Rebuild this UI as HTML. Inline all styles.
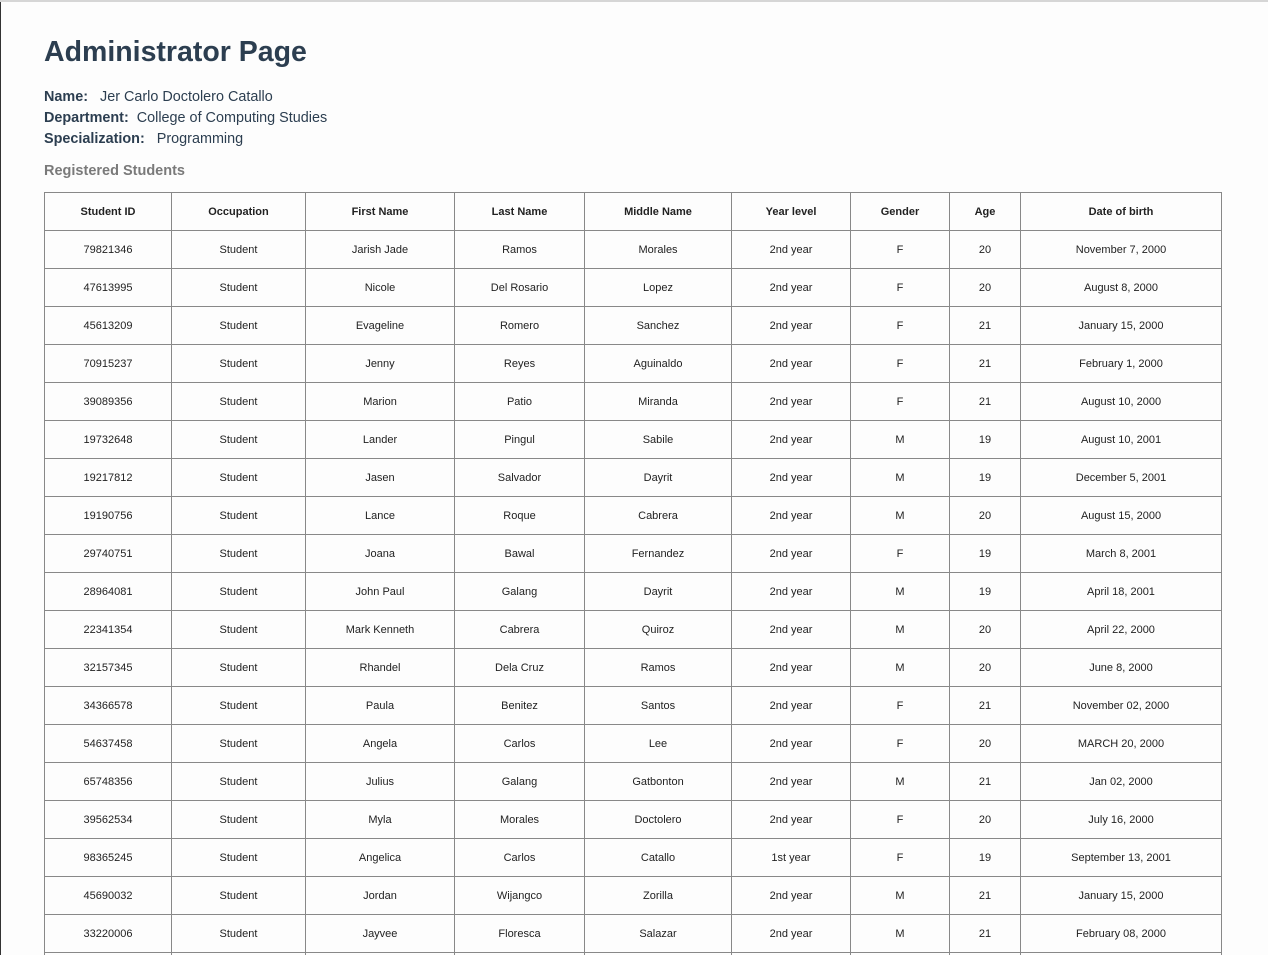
<!DOCTYPE html>
<html style="overflow:hidden;height:955px"><head><style>
html,body{margin:0;padding:0}
body{width:1268px;height:955px;overflow:hidden;background:#fdfdfd;font-family:"Liberation Sans",sans-serif;border-top:2px solid #d6d6d6;box-sizing:border-box;position:relative}
.lb{position:absolute;left:0;top:0;width:1px;height:955px;background:#333}
h1{position:absolute;left:44px;top:30px;margin:0;font-size:28.5px;color:#2c3e50;font-weight:bold;line-height:40px}
.info{position:absolute;left:44px;top:85px;font-size:14.4px;line-height:21px;color:#2c3e50}
.reg{position:absolute;left:44px;top:161px;font-size:14.5px;font-weight:bold;color:#7a7a7a}
table{position:absolute;left:44px;top:190px;border-collapse:collapse;font-size:11px;color:#222}
td,th{border:1px solid #888;height:37px;padding:0;text-align:center}
th{font-weight:bold}
</style></head><body>
<div class="lb"></div>
<h1>Administrator Page</h1>
<div class="info"><b>Name:</b>&nbsp;&nbsp; Jer Carlo Doctolero Catallo<br><b>Department:</b>&nbsp; College of Computing Studies<br><b>Specialization:</b>&nbsp;&nbsp; Programming</div>
<div class="reg">Registered Students</div>
<table>
<colgroup><col style="width:127px"><col style="width:134px"><col style="width:149px"><col style="width:130px"><col style="width:147px"><col style="width:119px"><col style="width:99px"><col style="width:71px"><col style="width:201px"></colgroup>
<tr><th>Student ID</th><th>Occupation</th><th>First Name</th><th>Last Name</th><th>Middle Name</th><th>Year level</th><th>Gender</th><th>Age</th><th>Date of birth</th></tr>
<tr><td>79821346</td><td>Student</td><td>Jarish Jade</td><td>Ramos</td><td>Morales</td><td>2nd year</td><td>F</td><td>20</td><td>November 7, 2000</td></tr>
<tr><td>47613995</td><td>Student</td><td>Nicole</td><td>Del Rosario</td><td>Lopez</td><td>2nd year</td><td>F</td><td>20</td><td>August 8, 2000</td></tr>
<tr><td>45613209</td><td>Student</td><td>Evageline</td><td>Romero</td><td>Sanchez</td><td>2nd year</td><td>F</td><td>21</td><td>January 15, 2000</td></tr>
<tr><td>70915237</td><td>Student</td><td>Jenny</td><td>Reyes</td><td>Aguinaldo</td><td>2nd year</td><td>F</td><td>21</td><td>February 1, 2000</td></tr>
<tr><td>39089356</td><td>Student</td><td>Marion</td><td>Patio</td><td>Miranda</td><td>2nd year</td><td>F</td><td>21</td><td>August 10, 2000</td></tr>
<tr><td>19732648</td><td>Student</td><td>Lander</td><td>Pingul</td><td>Sabile</td><td>2nd year</td><td>M</td><td>19</td><td>August 10, 2001</td></tr>
<tr><td>19217812</td><td>Student</td><td>Jasen</td><td>Salvador</td><td>Dayrit</td><td>2nd year</td><td>M</td><td>19</td><td>December 5, 2001</td></tr>
<tr><td>19190756</td><td>Student</td><td>Lance</td><td>Roque</td><td>Cabrera</td><td>2nd year</td><td>M</td><td>20</td><td>August 15, 2000</td></tr>
<tr><td>29740751</td><td>Student</td><td>Joana</td><td>Bawal</td><td>Fernandez</td><td>2nd year</td><td>F</td><td>19</td><td>March 8, 2001</td></tr>
<tr><td>28964081</td><td>Student</td><td>John Paul</td><td>Galang</td><td>Dayrit</td><td>2nd year</td><td>M</td><td>19</td><td>April 18, 2001</td></tr>
<tr><td>22341354</td><td>Student</td><td>Mark Kenneth</td><td>Cabrera</td><td>Quiroz</td><td>2nd year</td><td>M</td><td>20</td><td>April 22, 2000</td></tr>
<tr><td>32157345</td><td>Student</td><td>Rhandel</td><td>Dela Cruz</td><td>Ramos</td><td>2nd year</td><td>M</td><td>20</td><td>June 8, 2000</td></tr>
<tr><td>34366578</td><td>Student</td><td>Paula</td><td>Benitez</td><td>Santos</td><td>2nd year</td><td>F</td><td>21</td><td>November 02, 2000</td></tr>
<tr><td>54637458</td><td>Student</td><td>Angela</td><td>Carlos</td><td>Lee</td><td>2nd year</td><td>F</td><td>20</td><td>MARCH 20, 2000</td></tr>
<tr><td>65748356</td><td>Student</td><td>Julius</td><td>Galang</td><td>Gatbonton</td><td>2nd year</td><td>M</td><td>21</td><td>Jan 02, 2000</td></tr>
<tr><td>39562534</td><td>Student</td><td>Myla</td><td>Morales</td><td>Doctolero</td><td>2nd year</td><td>F</td><td>20</td><td>July 16, 2000</td></tr>
<tr><td>98365245</td><td>Student</td><td>Angelica</td><td>Carlos</td><td>Catallo</td><td>1st year</td><td>F</td><td>19</td><td>September 13, 2001</td></tr>
<tr><td>45690032</td><td>Student</td><td>Jordan</td><td>Wijangco</td><td>Zorilla</td><td>2nd year</td><td>M</td><td>21</td><td>January 15, 2000</td></tr>
<tr><td>33220006</td><td>Student</td><td>Jayvee</td><td>Floresca</td><td>Salazar</td><td>2nd year</td><td>M</td><td>21</td><td>February 08, 2000</td></tr>
<tr><td></td><td></td><td></td><td></td><td></td><td></td><td></td><td></td><td></td></tr>
</table>
</body></html>
